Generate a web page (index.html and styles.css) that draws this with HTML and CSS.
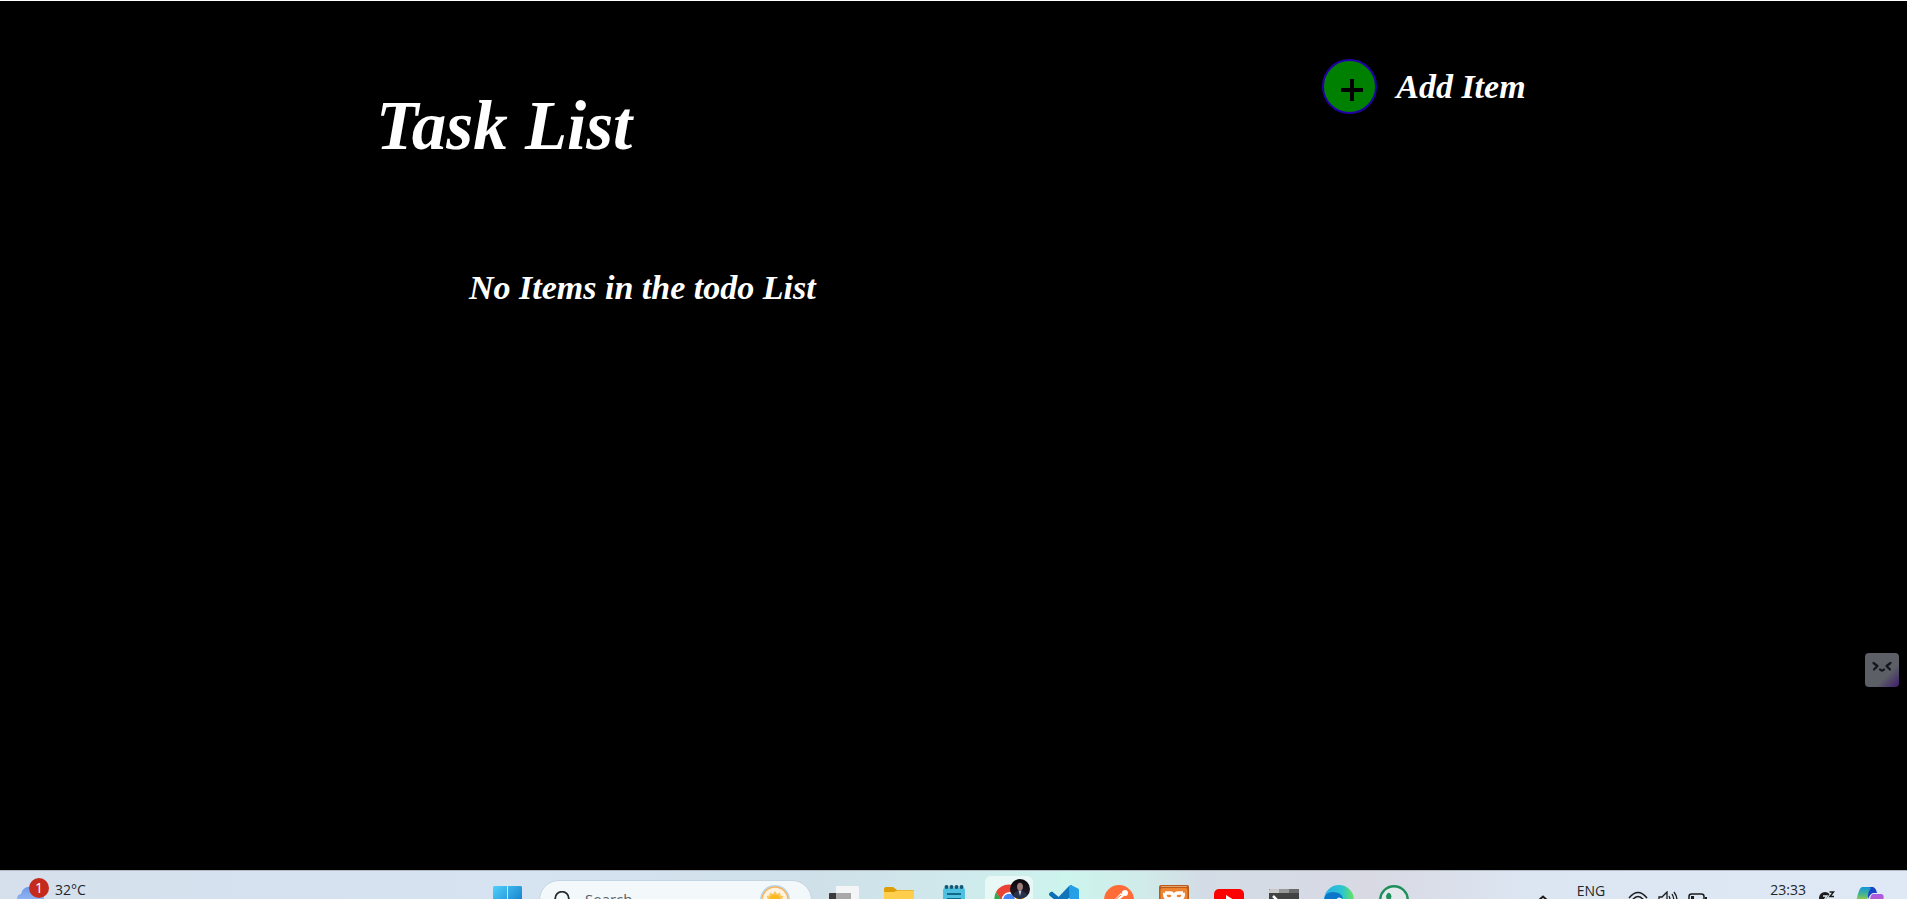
FILE: index.html
```html
<!DOCTYPE html>
<html lang="en">
<head>
<meta charset="utf-8">
<title>Task List</title>
<link rel="stylesheet" href="styles.css">
</head>
<body>
<main class="page">
  <header class="header">
    <h1 class="title">Task List</h1>
    <div class="add">
      <button class="add-button" id="add" type="button">
        <svg class="plus" viewBox="0 0 22 22"><path d="M11 0V22M0 11H22" stroke="#000" stroke-width="4"/></svg>
      </button>
      <label class="add-label" for="add">Add Item</label>
    </div>
  </header>
  <p class="empty">No Items in the todo List</p>
</main>

<button class="helper" type="button" aria-label="Assistant">
  <svg viewBox="0 0 34 34" width="34" height="34" fill="none" stroke="#14171f" stroke-width="2.2" stroke-linecap="round" stroke-linejoin="round"><path d="M8.500 10L12.500 13L9 16.500M25.500 10L21.500 13L25 16.500M15 16.500Q17 18.500 19 16.500"/></svg>
</button>

<footer class="taskbar">
  <div class="weather">
    <button class="weather-button" type="button" aria-label="Weather">
      <svg class="weather-icon" viewBox="0 0 34 38" width="34" height="38">
        <defs><linearGradient id="cloud" x1="0" y1="0" x2="0" y2="1"><stop offset="0" stop-color="#6f98ea"/><stop offset="1" stop-color="#a9c8fb"/></linearGradient></defs>
        <path d="M0 28a5 5 0 0 1 4-5a9 9 0 0 1 17-2a7 7 0 0 1 6 8v9H0z" fill="url(#cloud)"/>
        <circle cx="22" cy="17" r="10" fill="#c42b1c"/>
      </svg>
      <span class="badge">1</span>
    </button>
    <span class="temperature">32°C</span>
  </div>

  <div class="apps">
    <button class="start" type="button" aria-label="Start">
      <svg viewBox="0 0 29 29" width="29" height="29">
        <defs><linearGradient id="win" x1="0" y1="0" x2="1" y2="1"><stop offset="0" stop-color="#4fd0fb"/><stop offset="1" stop-color="#0669bf"/></linearGradient></defs>
        <path d="M1 0H14V14H0V1zM15 0H28L29 1V14H15zM0 15H14V29H0zM15 15H29V29H15z" fill="url(#win)"/>
      </svg>
    </button>
    <label class="search">
      <svg viewBox="0 0 18 18" width="18" height="18" fill="none" stroke="#222a30" stroke-width="1.800"><circle cx="9" cy="7.500" r="6.800"/><path d="M4 13L0 17"/></svg>
      <input class="search-input" type="text" placeholder="Search" aria-label="Search">
      <svg viewBox="0 0 30 30" width="30" height="30">
        <circle cx="15" cy="15" r="14.300" fill="none" stroke="#b9d7ea" stroke-width="1.500"/>
        <circle cx="15" cy="15" r="13" fill="#fdf3e0" stroke="#f5b463" stroke-width="1.500"/>
        <path d="M15 6L17 9L20 7.500L20.500 10.500L23.500 11L22 14L24 16L6 16L8 14L6.500 11L9.500 10.500L10 7.500L13 9z" fill="#f9c75e"/>
        <circle cx="15" cy="15" r="5.500" fill="#fbb91d"/>
      </svg>
    </label>

    <div class="pinned">
      <button class="app" type="button" aria-label="Task view">
        <svg viewBox="0 0 30 30" width="30" height="30"><path d="M0 9a1 1 0 0 1 1-1H22V26H0z" fill="#3a3a3a"/><rect x="7" y="1" width="23" height="22" rx="1" fill="#f4f5f6"/><path d="M7 8H22V23H7z" fill="#a8a8a8"/></svg>
      </button>
      <button class="app" type="button" aria-label="File Explorer">
        <svg viewBox="0 0 30 30" width="30" height="30"><path d="M0 4a2 2 0 0 1 2-2H9L13 5H29a1 1 0 0 1 1 1V12H0z" fill="#dd9e0a"/><path d="M0 7H10L13 5.500H30V27H0z" fill="#ffce4d"/></svg>
      </button>
      <button class="app" type="button" aria-label="Notepad">
        <svg viewBox="0 0 30 30" width="30" height="30"><rect x="4" y="3" width="22" height="27" rx="2" fill="#4fc0df"/><g fill="#0e5775"><circle cx="7.500" cy="2" r="2"/><circle cx="12.500" cy="2" r="2"/><circle cx="17.500" cy="2" r="2"/><circle cx="22.500" cy="2" r="2"/></g><path d="M8 9H22M8 14H22M8 19H22" stroke="#126a8b" stroke-width="2"/></svg>
      </button>
      <button class="app active" type="button" aria-label="Chrome">
        <svg class="profile-icon" viewBox="0 0 38 34" width="38" height="34">
          <defs><linearGradient id="suit" x1="0" y1="0" x2="0" y2="1"><stop offset="0" stop-color="#08060a"/><stop offset="1" stop-color="#2b2230"/></linearGradient></defs>
          <path d="M6 12A15 15 0 0 1 32 12H19L12 22z" fill="#ea4335"/><path d="M6 12A15 15 0 0 0 19 34L21 26L12 21z" fill="#34a853"/><path d="M32 12A15 15 0 0 1 19 34L26 19L22 12z" fill="#fbbc05"/>
          <circle cx="19" cy="19.500" r="7.200" fill="#fff"/><circle cx="19" cy="19.500" r="5.800" fill="#4285f4"/>
          <circle cx="30" cy="9" r="10" fill="url(#suit)"/><ellipse cx="30" cy="6.500" rx="3" ry="4" fill="#9b7b7c"/><path d="M27 5Q30 0 33 5L33 2H27z" fill="#171116"/><path d="M23 16Q24 12 28 11H32Q36 12 37 16L30 19z" fill="#27334d"/><path d="M28.500 10.500H31.500L30 16z" fill="#c8c5d2"/>
        </svg>
      </button>
      <button class="app" type="button" aria-label="Visual Studio Code">
        <svg viewBox="0 0 30 30" width="30" height="30"><path d="M1 7.500L3 6.500L22 22V28L1 11Q-1 9 1 7.500z" fill="#0a6fb5"/><path d="M1 21L20 1L23 0V11L4 24z" fill="#1274ba"/><path d="M20 1L22 0L29 3.500Q30 4 30 5V25L21 30Z" fill="#259fe6"/></svg>
      </button>
      <button class="app" type="button" aria-label="Postman">
        <svg viewBox="0 0 30 30" width="30" height="30"><circle cx="15" cy="15" r="15" fill="#ff6c37"/><path d="M7 18L17 8L20 11L11 18z" fill="#fff"/><circle cx="21" cy="8" r="3" fill="#fff"/><path d="M11 15L17 10" stroke="#ff6c37" stroke-width="1"/></svg>
      </button>
      <button class="app" type="button" aria-label="XAMPP">
        <svg viewBox="0 0 30 30" width="30" height="30"><rect width="30" height="30" rx="2" fill="#b9591a"/><rect x="1.500" y="3" width="27" height="25" rx="2" fill="#ed8431"/><path d="M2 1.500H28" stroke="#e5a26e"/><g fill="none" stroke="#fff" stroke-width="3.500"><path d="M6 8H11Q14 8 14 11Q14 14 10 14H6"/><path d="M24 8H19Q16 8 16 11Q16 14 20 14H24"/><path d="M6 8Q5 11 8 14M24 8Q25 11 22 14"/></g></svg>
      </button>
      <button class="app" type="button" aria-label="YouTube">
        <svg viewBox="0 0 30 30" width="30" height="30"><rect y="4" width="30" height="22" rx="5" fill="#f00"/><path d="M12 10L20 15L12 20z" fill="#fff"/></svg>
      </button>
      <button class="app" type="button" aria-label="Terminal">
        <svg viewBox="0 0 30 30" width="30" height="30"><rect y="4" width="30" height="24" rx="1" fill="#424242"/><path d="M0 8V5L1 4H10V8z" fill="#c8c8c8"/><path d="M10 4H20V8H10z" fill="#989898"/><path d="M20 4H29L30 5V8H20z" fill="#6a6a6a"/><path d="M4 11L9 16L4 21" fill="none" stroke="#fff" stroke-width="2.500"/></svg>
      </button>
      <button class="app" type="button" aria-label="Edge">
        <svg viewBox="0 0 30 30" width="30" height="30"><defs><linearGradient id="edge"><stop offset="0" stop-color="#2aaee8"/><stop offset=".6" stop-color="#2cc4cf"/><stop offset="1" stop-color="#66e45c"/></linearGradient></defs><circle cx="15" cy="15" r="15" fill="url(#edge)"/><path d="M0 15Q1 7 9 7Q17 7 19 13Q12 13 12 19Q12 26 20 29Q3 31 0 15z" fill="#0c77c9"/><path d="M12 16Q13 11 17 13Q18 15 17 18H12z" fill="#e5f3fa"/></svg>
      </button>
      <button class="app" type="button" aria-label="WhatsApp">
        <svg viewBox="0 0 30 30" width="30" height="30"><circle cx="15" cy="15" r="13.800" fill="#e3e8ec" stroke="#1d8f5b" stroke-width="2.400"/><path d="M8 9Q10 6.500 12 9.500L12.500 12Q11 14 13 16Q17 20 19 18L22 20Q21 23 17 22Q8 19 7 11z" fill="#1d8f5b"/></svg>
      </button>
    </div>
  </div>

  <div class="tray">
    <button class="chevron" type="button" aria-label="Hidden icons"><svg viewBox="0 0 20 20" width="20" height="20"><path d="M5 14L10 9.500L15 14" fill="none" stroke="#1b1b1b" stroke-width="2"/></svg></button>
    <span class="language">ENG</span>
    <button class="status" type="button" aria-label="Network, volume and battery">
      <svg viewBox="0 0 20 20" width="20" height="20" fill="none" stroke="#1b1b1b" stroke-width="1.500"><path d="M1 7Q10-4 19 7M4 9.500Q10 1.500 16 9.500M7 12Q10 8 13 12"/></svg>
      <svg viewBox="0 0 20 20" width="20" height="20" fill="none" stroke="#1b1b1b" stroke-width="1.300"><path d="M1 6H4L9 1V17L4 13H1zM11 5Q13 9 11 13M14 3Q17.500 9 14 15M16 1Q22 9 16 17"/></svg>
      <svg viewBox="0 0 20 20" width="20" height="20" fill="none" stroke="#1b1b1b" stroke-width="1.500"><rect x="1" y="3" width="15" height="10" rx="2.500"/><path d="M18 6V10" stroke-width="2"/><path d="M4.500 5V11" stroke-width="3"/></svg>
    </button>
    <time class="clock">23:33</time>
    <button class="quiet" type="button" aria-label="Do not disturb"><svg viewBox="0 0 16 16" width="16" height="16"><circle cx="6" cy="7" r="6" fill="#1b1b1b"/><path d="M4 5H8L5 9H9" fill="none" stroke="#e0eaf5" stroke-width="1.300"/><path d="M10 1H15L11 6H15.500" fill="none" stroke="#e0eaf5" stroke-width="4"/><path d="M10.500 1H14.500L11 5.500H15" fill="none" stroke="#1b1b1b" stroke-width="1.500"/></svg></button>
    <button class="copilot" type="button" aria-label="Copilot">
      <svg viewBox="0 0 28 28" width="28" height="28"><defs><linearGradient id="cpa" x1="0" y1="0" x2="0" y2="1"><stop offset="0" stop-color="#1295dc"/><stop offset=".35" stop-color="#43b391"/><stop offset=".7" stop-color="#a6cf3a"/></linearGradient><linearGradient id="cpb" x1="0" y1="0" x2="0" y2="1"><stop offset="0" stop-color="#a65be8"/><stop offset="1" stop-color="#ef5a78"/></linearGradient></defs><path d="M6 0H17Q13 2 11 14L8 20H1Q-1 18 1 11Q3 1 6 0z" fill="url(#cpa)"/><path d="M13 0H17Q20 1 21 6H17Q14 7 12 12Q11 6 15 1z" fill="#1744c4"/><path d="M17 7H25Q29 7 27 14Q25 26 20 28H10Q14 24 14 14Q14 8 17 7z" fill="url(#cpb)"/></svg>
    </button>
  </div>
</footer>
</body>
</html>
```

FILE: styles.css
```css
* {
  box-sizing: border-box;
}

body {
  display: flex;
  flex-direction: column;
  height: 100vh;
  margin: 0;
  overflow: hidden;
  background: #000;
  color: #fff;
  font-family: "Liberation Serif", "Times New Roman", serif;
}

button {
  display: flex;
  padding: 0;
  border: 0;
  background: none;
  color: inherit;
  font: inherit;
}

svg {
  display: block;
  flex: none;
}

.page {
  flex: 1;
  padding: 58px 20% 0 376px;
  border-top: 1px solid #fff;
}

.header {
  display: flex;
  justify-content: space-between;
  align-items: flex-start;
}

.title {
  margin: 27px 0 0;
  font-size: 69px;
  line-height: 80px;
  font-style: italic;
}

.add {
  display: flex;
  align-items: center;
  gap: 19px;
}

.add-button {
  align-items: center;
  justify-content: center;
  width: 55px;
  height: 55px;
  padding: 7px 0 0 5px;
  border: 2px solid #2200a8;
  border-radius: 50%;
  background: #008000;
}

.plus {
  width: 22px;
  height: 22px;
}

.add-label,
.empty {
  font-size: 34px;
  line-height: 40px;
  font-style: italic;
  font-weight: bold;
}

.empty {
  margin: 102px 0 0 93px;
}

.helper {
  position: fixed;
  right: 8px;
  bottom: 212px;
  border-radius: 4px;
  background: linear-gradient(135deg, #5c5f65 65%, #3f1d6b);
}

.taskbar {
  display: flex;
  flex: none;
  align-items: flex-start;
  height: 29px;
  overflow: hidden;
  border-top: 1px solid #b3b9c0;
  background: linear-gradient(90deg, #d5e0ec, #d6e3f1 28%, #cfe0e9 43%, #cfe9ec 50%, #cdf4ed 56%, #d0ebe9 60%, #d3dce6 63%, #d8d9e3 72%, #dce6f2 80%, #dfe9f5);
  color: #22272b;
  font-family: "Open Sans", "Noto Sans", sans-serif;
  font-size: 14px;
  line-height: 20px;
}

.weather,
.tray {
  display: flex;
  flex: 1 1 0;
  align-items: flex-start;
}

.weather {
  gap: 4px;
  padding-left: 17px;
}

.weather-button {
  position: relative;
}

.badge {
  position: absolute;
  top: 7px;
  left: 12px;
  width: 20px;
  color: #fff;
  text-align: center;
}

.temperature {
  padding-top: 9px;
}

.apps {
  display: flex;
  align-items: flex-start;
  width: 935px;
  padding-left: 3px;
}

.start {
  margin: 15px 17px 0 7px;
}

.search {
  display: flex;
  flex: none;
  align-items: flex-start;
  width: 273px;
  height: 40px;
  margin-top: 9px;
  padding: 4px 21px 0 13px;
  border: 1px solid #c3d5e0;
  border-radius: 20px;
  background: #f3f8fb;
}

.search > svg:first-child {
  margin-top: 6px;
}

.search-input {
  flex: 1;
  min-width: 0;
  height: 20px;
  margin: 4px 0 0;
  padding: 0 0 0 14px;
  border: 0;
  background: none;
  font: 15px/20px "Open Sans", "Noto Sans", sans-serif;
}

.search-input::placeholder {
  color: #5b6166;
  opacity: 1;
}

.pinned {
  display: flex;
  flex: none;
  gap: 7px;
  margin: 5px 0 0 8px;
}

.app {
  justify-content: center;
  width: 48px;
  height: 48px;
  padding-top: 9px;
  border-radius: 6px;
}

.active {
  padding-top: 4px;
  background: #e8f8f7;
}

.profile-icon {
  overflow: visible;
}

.tray {
  justify-content: flex-end;
  padding-right: 23px;
}

.chevron {
  margin: 16px 24px 0 0;
}

.language {
  margin: 10px 23px 0 0;
}

.status {
  gap: 10px;
  margin: 20px 62px 0 0;
}

.clock {
  margin: 9px 13px 0 0;
}

.quiet {
  margin: 20px 21px 0 0;
}

.copilot {
  margin-top: 16px;
}
```
